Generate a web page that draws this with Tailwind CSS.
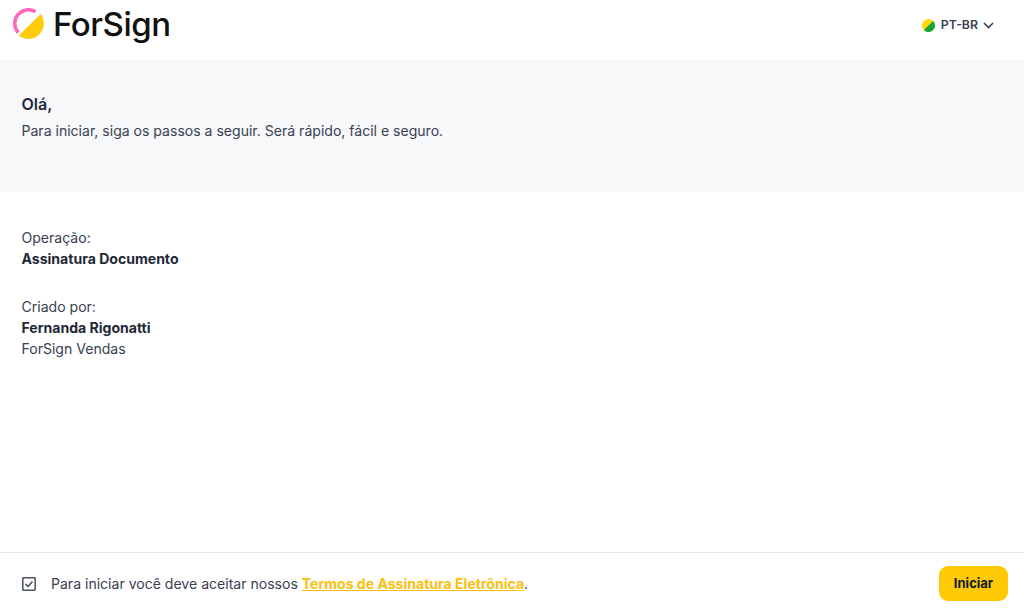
<!DOCTYPE html>
<html lang="pt-BR">
<head>
<meta charset="utf-8">
<script src="https://cdn.jsdelivr.net/npm/@tailwindcss/browser@4"></script>
</head>
<body class="bg-white font-['Inter',sans-serif] text-[#1f2937]">
<div class="flex flex-col h-[609px] w-[1024px] overflow-hidden">
  <header class="h-[60px] shrink-0 flex items-start justify-between pl-[13px] pr-[30px]">
    <div class="flex items-start">
      <svg class="mt-[8px]" width="31" height="31" viewBox="0 0 31 31">
        <path d="M27.7 6 L5.7 27.5 A15.5 15.5 0 0 0 27.7 6Z" fill="#ffcb0b"/>
        <path d="M5.3 24.7 A13.75 13.75 0 0 1 22.6 3.7" fill="none" stroke="#fb68bd" stroke-width="3.5"/>
      </svg>
      <span class="ml-[9px] mt-[1px] text-[33px] leading-[46px] font-medium tracking-[-0.45px] text-[#111]">ForSign</span>
    </div>
    <div class="flex items-center mt-[16px] h-[18px]">
      <svg width="13" height="13" viewBox="0 0 13 13"><circle cx="6.5" cy="6.5" r="6.5" fill="#ffd90a"/><path d="M11.1 1.9A6.5 6.5 0 0 1 1.9 11.1Z" fill="#12a538"/></svg>
      <span class="ml-[6px] text-[12.3px] font-semibold text-[#374151]">PT-BR</span>
      <svg class="ml-[5px]" width="11" height="7" viewBox="0 0 11 7"><path d="M1 1l4.5 4.5L10 1" fill="none" stroke="#374151" stroke-width="1.6"/></svg>
    </div>
  </header>
  <section class="h-[132px] shrink-0 bg-[#f7f8fa] px-[21.5px] pt-[33px]">
    <p class="text-[16px] leading-[22px] font-semibold text-[#1f2937]">Olá,</p>
    <p class="mt-[5px] text-[14.05px] leading-[22px] text-[#374151]">Para iniciar, siga os passos a seguir. Será rápido, fácil e seguro.</p>
  </section>
  <main class="flex-1 px-[21.5px] pt-[35px] text-[14.05px] leading-[21px] text-[#374151]">
    <p>Operação:</p>
    <p class="font-bold text-[#1f2937]">Assinatura Documento</p>
    <p class="mt-[27px]">Criado por:</p>
    <p class="font-bold text-[#1f2937]">Fernanda Rigonatti</p>
    <p>ForSign Vendas</p>
  </main>
  <footer class="h-[57px] shrink-0 border-t border-[#e5e7eb] flex items-center justify-between pl-[22px] pr-[16px] pt-[5px]">
    <div class="flex items-center">
      <svg width="14" height="14" viewBox="0 0 14 14"><rect x="0.75" y="0.75" width="12.5" height="12.5" rx="1.5" fill="none" stroke="#4b5563" stroke-width="1.6"/><path d="M3.5 7l2.5 2.5 4.5-5" fill="none" stroke="#374151" stroke-width="1.4"/></svg>
      <p class="ml-[15px] text-[14.05px] text-[#374151]">Para iniciar você deve aceitar nossos <a class="font-bold text-[#fdc010] underline">Termos de Assinatura Eletrônica</a>.</p>
    </div>
    <button class="w-[69px] h-[35px] rounded-[9px] bg-[#ffca05] text-[13px] font-bold text-[#111827]">Iniciar</button>
  </footer>
</div>
</body>
</html>
